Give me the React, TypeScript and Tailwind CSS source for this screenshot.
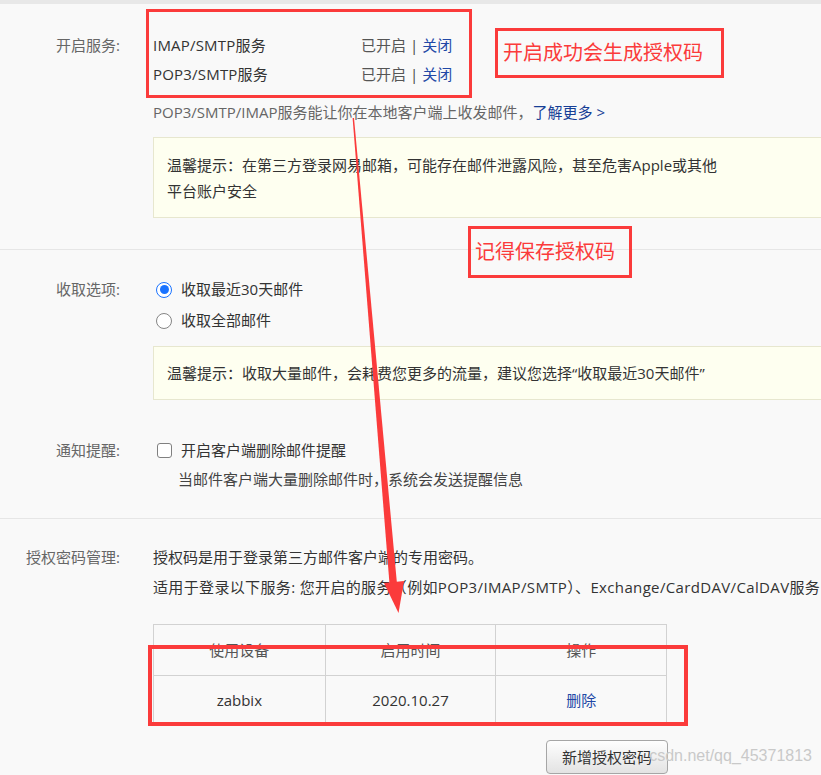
import React from "react";

function Label({ children, h }: { children: React.ReactNode; h: string }) {
  return (
    <div className={`w-[120px] shrink-0 text-right text-[#666] ${h}`}>{children}</div>
  );
}

function Status() {
  return (
    <div className="flex text-[#555]">
      <span>已开启</span>
      <span className="mx-[4px] text-[#444]">|</span>
      <span className="text-[#2148a6]">关闭</span>
    </div>
  );
}

export default function App() {
  return (
    <div className="relative w-[821px] h-[775px] overflow-hidden bg-[#f9f9f9] text-[15px] text-[#333] font-['Open_Sans','Noto_Sans_CJK_SC',sans-serif]">
      <div className="h-[4px] bg-[#e8e8e8]" />

      {/* Section 1 */}
      <div className="pt-[27px] pb-[31px] border-b border-[#e6e6e6]">
        <div className="flex">
          <Label h="leading-[29px]">开启服务:</Label>
          <div className="ml-[33px] flex-1 min-w-0">
            <div className="flex leading-[29px]">
              <div className="w-[208px] tracking-[0.2px]">IMAP/SMTP服务</div>
              <Status />
            </div>
            <div className="flex leading-[29px]">
              <div className="w-[208px] tracking-[0.2px]">POP3/SMTP服务</div>
              <Status />
            </div>
            <div className="mt-[9px] leading-[29px] text-[#666] whitespace-nowrap">
              POP3/SMTP/IMAP服务能让你在本地客户端上收发邮件，
              <span className="text-[#173f96]">了解更多 &gt;</span>
            </div>
            <div className="mt-[10px] w-[720px] border border-[#e7e7cf] bg-[#fefff0] pl-[13px] pt-[14px] pb-[13px] leading-[26px] whitespace-nowrap">
              温馨提示：在第三方登录网易邮箱，可能存在邮件泄露风险，甚至危害Apple或其他
              <br />
              平台账户安全
            </div>
          </div>
        </div>
      </div>

      {/* Section 2 */}
      <div className="pt-[24px] pb-[24px] border-b border-[#e6e6e6]">
        <div className="flex">
          <Label h="leading-[31px]">收取选项:</Label>
          <div className="ml-[33px] flex-1 min-w-0">
            <div className="flex items-center h-[31px] pl-[3px]">
              <span className="flex items-center justify-center w-[16px] h-[16px] rounded-full border border-[#1a73ff] bg-white">
                <span className="w-[9px] h-[9px] rounded-full bg-[#1a73ff]" />
              </span>
              <span className="ml-[9px]">收取最近30天邮件</span>
            </div>
            <div className="flex items-center h-[31px] pl-[3px]">
              <span className="w-[16px] h-[16px] rounded-full border border-[#858585] bg-white" />
              <span className="ml-[9px]">收取全部邮件</span>
            </div>
            <div className="mt-[10px] w-[720px] border border-[#e7e7cf] bg-[#fefff0] pl-[13px] py-[13px] leading-[26px] whitespace-nowrap">
              温馨提示：收取大量邮件，会耗费您更多的流量，建议您选择“收取最近30天邮件”
            </div>
          </div>
        </div>
        <div className="flex mt-[36px]">
          <Label h="leading-[29px]">通知提醒:</Label>
          <div className="ml-[33px] flex-1 min-w-0">
            <div className="flex items-center h-[29px] pl-[4px]">
              <span className="w-[15px] h-[15px] rounded-[3px] border border-[#808080] bg-white" />
              <span className="ml-[9px]">开启客户端删除邮件提醒</span>
            </div>
            <div className="pl-[25px] leading-[29px] text-[#444]">
              当邮件客户端大量删除邮件时，系统会发送提醒信息
            </div>
          </div>
        </div>
      </div>

      {/* Section 3 */}
      <div className="pt-[23px]">
        <div className="flex">
          <Label h="leading-[30px]">授权密码管理:</Label>
          <div className="ml-[33px] flex-1 min-w-0">
            <div className="leading-[30px] whitespace-nowrap">
              授权码是用于登录第三方邮件客户端的专用密码。
            </div>
            <div className="leading-[30px] whitespace-nowrap tracking-[0.35px]">
              适用于登录以下服务: 您开启的服务（例如POP3/IMAP/SMTP）、Exchange/CardDAV/CalDAV服务
            </div>
            <div className="mt-[22px] w-[514px] border border-[#d2d2d2]">
              <div className="grid grid-cols-3 h-[51px] border-b border-[#d2d2d2] text-[#555]">
                <div className="flex items-center justify-center">使用设备</div>
                <div className="flex items-center justify-center border-l border-[#d2d2d2]">启用时间</div>
                <div className="flex items-center justify-center border-l border-[#d2d2d2]">操作</div>
              </div>
              <div className="grid grid-cols-3 h-[48px]">
                <div className="flex items-center justify-center">zabbix</div>
                <div className="flex items-center justify-center border-l border-[#d2d2d2]">2020.10.27</div>
                <div className="flex items-center justify-center border-l border-[#d2d2d2] text-[#2148a6]">删除</div>
              </div>
            </div>
            <div className="mt-[15px] ml-[393px] w-[122px] h-[34px] flex items-center justify-center rounded-[4px] border border-[#a6a6a6] bg-gradient-to-b from-[#fefefe] to-[#e3e3e3] text-[#333]">
              新增授权密码
            </div>
          </div>
        </div>
      </div>

      {/* Annotation overlays */}
      <div className="absolute left-[146px] top-[9px] w-[326px] h-[89px] border-[3px] border-[#fb3b3b]" />
      <div className="absolute left-[495px] top-[28px] w-[229px] h-[50px] border-[3px] border-[#fb3b3b] flex items-center pl-[5px] text-[20px] text-[#fb3b3b]">
        开启成功会生成授权码
      </div>
      <div className="absolute left-[468px] top-[226px] w-[164px] h-[52px] border-[3px] border-[#fb3b3b] flex items-center pl-[4px] text-[20px] text-[#fb3b3b]">
        记得保存授权码
      </div>
      <div className="absolute left-[148px] top-[645px] w-[540px] h-[81px] border-[4px] border-[#fb3b3b]" />

      <svg className="absolute inset-0 pointer-events-none" width="821" height="775" viewBox="0 0 821 775">
        <polygon points="352.6,118 354,118 397,584 389.5,584" fill="#fb3b3b" />
        <polygon points="384,583 404,581 398.5,613" fill="#fb3b3b" />
      </svg>

      <div className="absolute right-[9px] top-[745px] text-[16px] leading-[22px] text-[#c9c9c9] font-['Liberation_Sans',Arial,sans-serif] pointer-events-none">
        csdn.net/qq_45371813
      </div>
    </div>
  );
}
